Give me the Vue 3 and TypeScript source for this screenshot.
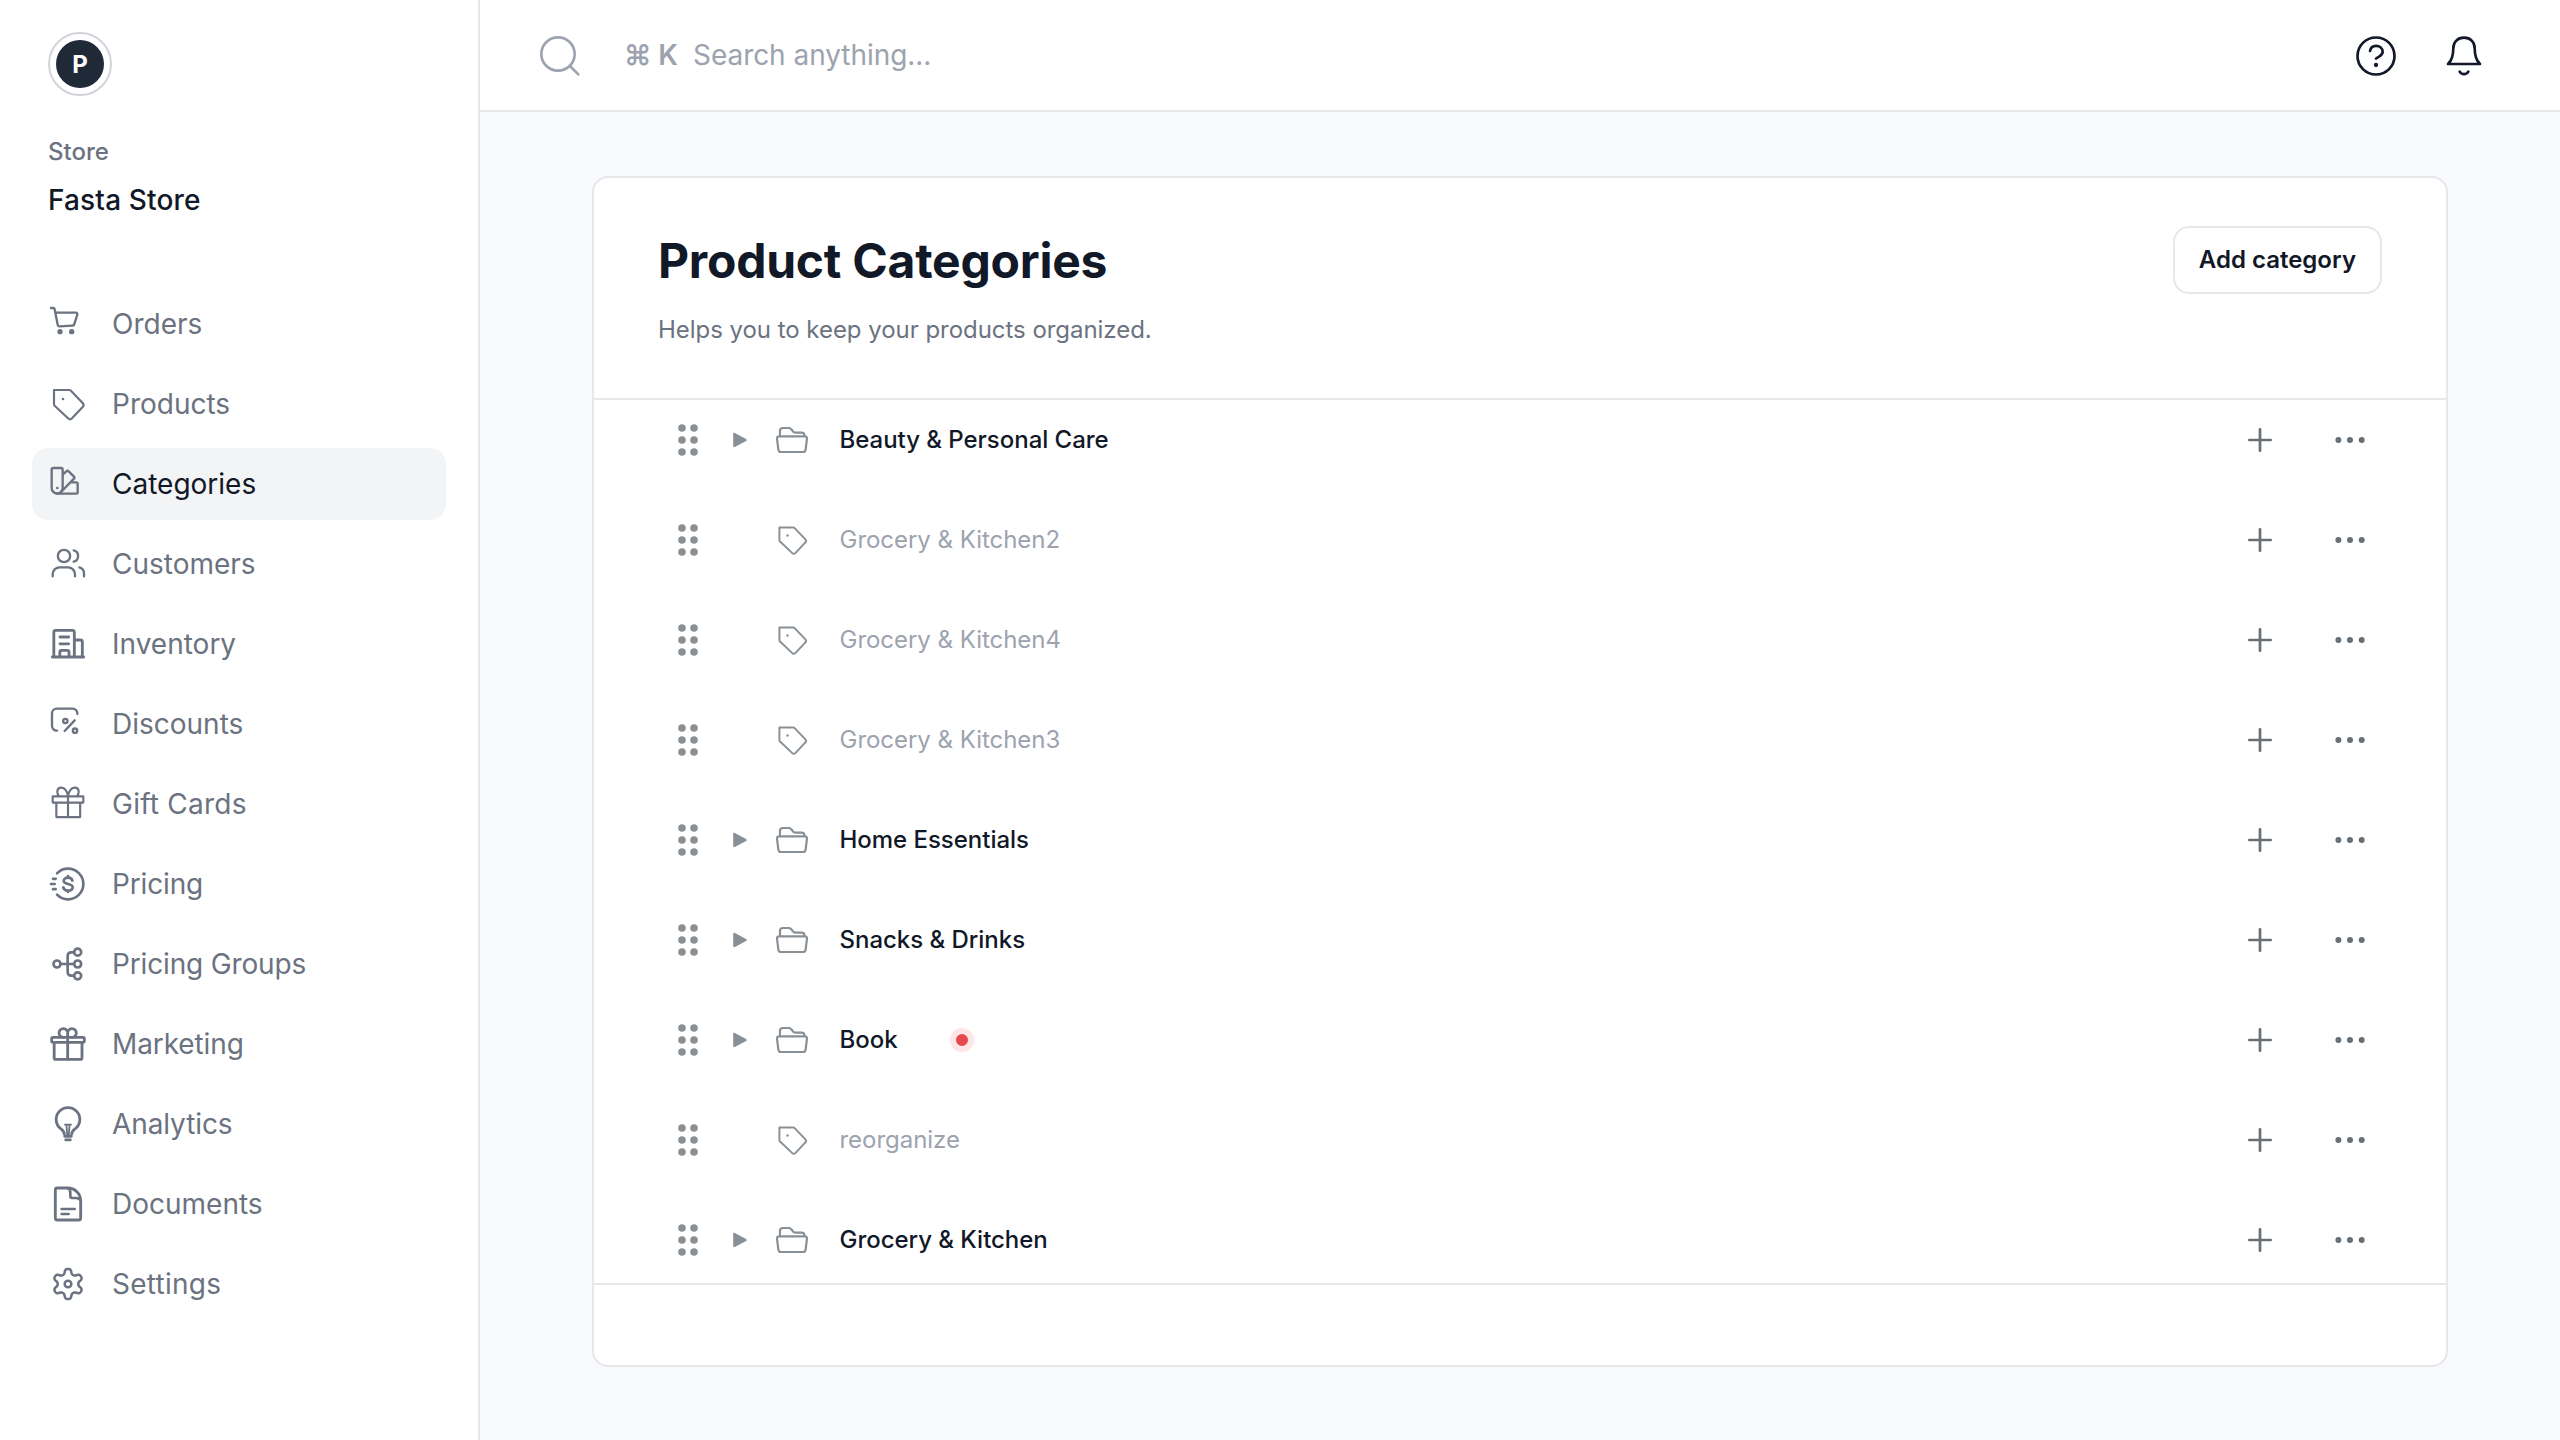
<script setup lang="ts">
import { ref } from 'vue'

interface NavItem {
  label: string
  icon: string
  stroke: number
  tracking?: number
}

interface Category {
  name: string
  hasChildren: boolean
  flagged?: boolean
}

// Six-lobed outline of the settings gear, centred in a 120 unit box.
function gearOutline(): string {
  const points: string[] = []
  for (let i = 0; i < 180; i++) {
    const angle = (i / 180) * Math.PI * 2
    const radius = 38 + (7 * Math.tanh(1.6 * Math.cos(6 * angle))) / Math.tanh(1.6)
    const x = 60 + radius * Math.sin(angle)
    const y = 60 - radius * Math.cos(angle)
    points.push(`${x.toFixed(2)} ${y.toFixed(2)}`)
  }
  return `M${points.join('L')}Z`
}

const tagIcon =
  '<path d="M18 18H64c2 0 3 .5 4 1.5L104 57c4 4 4 8 0 12L72 103c-4 4-8 4-12 0L20 65c-1-1-2-2-2-4z"/><circle cx="45" cy="45" r="4" fill="currentColor" stroke="none"/>'

const navItems: NavItem[] = [
  {
    label: 'Orders',
    stroke: 7,
    icon: '<path d="M9 12h7q3 0 4 4l9 46q1 5 6 5l36-2q7 0 8-5l9-28q1-6-5-6H22"/><g fill="currentColor" stroke="none"><circle cx="36" cy="83" r="8"/><circle cx="71" cy="83" r="8"/></g>',
  },
  { label: 'Products', stroke: 6.5, icon: tagIcon },
  {
    label: 'Categories',
    stroke: 7,
    icon: '<path d="M11 17a5 5 0 0 1 5-5h23a5 5 0 0 1 5 5v55a16.500 16.500 0 0 1-33 0z"/><path d="M45 31l10-9q4-3 7 0l16 16q3 3 0 6L39 84"/><path d="M72 55h13q4 0 4 4v26q0 4-4 4H27"/><circle cx="28" cy="72" r="4" fill="currentColor" stroke="none"/>',
  },
  {
    label: 'Customers',
    stroke: 7,
    icon: '<circle cx="48" cy="36" r="18.500"/><path d="M14 97V91A21 21 0 0 1 35 70H60A21 21 0 0 1 81 91V97M77 19a17.500 17.500 0 0 1 0 34M94 70a19 19 0 0 1 14 19v8"/>',
  },
  {
    label: 'Inventory',
    stroke: 8.5,
    icon: '<path d="M13 99H107M17.500 99V25a6 6 0 0 1 6-6H73a6 6 0 0 1 6 6V99M79 48H97a6 6 0 0 1 6 6V99M36 39H62M36 59.500H62M35.500 99V84a5 5 0 0 1 5-5H58a5 5 0 0 1 5 5V99"/>',
  },
  {
    label: 'Discounts',
    stroke: 7,
    icon: '<path d="M88 30V28A14 14 0 0 0 74 14H26A14 14 0 0 0 12 28V66A14 14 0 0 0 27 80M50 81L80 49"/><circle cx="52" cy="51" r="6.500"/><circle cx="81" cy="80" r="6.500"/>',
  },
  {
    label: 'Gift Cards',
    stroke: 6.5,
    tracking: 0.25,
    icon: '<path d="M15 37H105a1 1 0 0 1 1 1V55a1 1 0 0 1-1 1H15a1 1 0 0 1-1-1V38a1 1 0 0 1 1-1zM25 56V98a1.500 1.500 0 0 0 1.500 1.500H95a1.500 1.500 0 0 0 1.500-1.500V56M60 36V99M60 36C58 22 50 11 41 11c-8 0-13 5-13 12 0 6 2 10 5 13M60 36C62 22 70 11 79 11c8 0 13 5 13 12 0 6-2 10-5 13"/>',
  },
  {
    label: 'Pricing',
    stroke: 8,
    tracking: -0.15,
    icon: '<path d="M27 28A46 46 0 1 1 27 92M15 44.500H23M9 60H20M15 75.500H23M73 50c-1-6-6-9-13-9s-13 4-13 9.500c0 6 5 8 13 9.500s14 4 14 10-6 10-14 10-13-4-14-10M60 36v5M60 80v4"/>',
  },
  {
    label: 'Pricing Groups',
    stroke: 8,
    tracking: -0.15,
    icon: '<circle cx="27" cy="60" r="10.500"/><circle cx="89" cy="24.500" r="10.500"/><circle cx="89" cy="60" r="10.500"/><circle cx="89" cy="95.500" r="10.500"/><path d="M38 60H78M78 25H69a10 10 0 0 0-10 10V85a10 10 0 0 0 10 10H78"/>',
  },
  {
    label: 'Marketing',
    stroke: 8.5,
    tracking: -0.1,
    icon: '<rect x="11" y="40" width="98" height="15" rx="4"/><path d="M18.500 55V101a5 5 0 0 0 5 5H97a5 5 0 0 0 5-5V55M59 28V106M59 40V28a13 13 0 1 0-13 12M59 28a13 13 0 1 1 13 12"/>',
  },
  {
    label: 'Analytics',
    stroke: 8.5,
    tracking: -0.1,
    icon: '<path d="M49 91c0-7-4-12-11-17A35.500 35.500 0 1 1 82 74c-7 5-11 10-11 17M50 97H70M53 107.500H67"/><path stroke-width="5.500" d="M51 62H69M55.500 64L57.500 92M64.500 64L62.500 92"/>',
  },
  {
    label: 'Documents',
    stroke: 8.5,
    icon: '<path d="M28 12H59c22 0 39 17 39 39V102a6 6 0 0 1-6 6H28a6 6 0 0 1-6-6V18a6 6 0 0 1 6-6z"/><path stroke-width="8" d="M58 12q9 3 9 13v12q0 5 5 5h12q8 0 13 6M41 75H80M41 90H62"/>',
  },
  {
    label: 'Settings',
    stroke: 7.5,
    tracking: 0.25,
    icon: `<path d="${gearOutline()}"/><circle cx="60" cy="60" r="10"/>`,
  },
]

const active = ref('Categories')

const categories: Category[] = [
  { name: 'Beauty & Personal Care', hasChildren: true },
  { name: 'Grocery & Kitchen2', hasChildren: false },
  { name: 'Grocery & Kitchen4', hasChildren: false },
  { name: 'Grocery & Kitchen3', hasChildren: false },
  { name: 'Home Essentials', hasChildren: true },
  { name: 'Snacks & Drinks', hasChildren: true },
  { name: 'Book', hasChildren: true, flagged: true },
  { name: 'reorganize', hasChildren: false },
  { name: 'Grocery & Kitchen', hasChildren: true },
]
</script>

<template>
  <div class="shell">
    <aside class="sidebar">
      <div class="avatar"><span class="avatar-letter">P</span></div>
      <div class="store-label">Store</div>
      <div class="store-name">Fasta Store</div>
      <nav class="nav">
        <a
          v-for="item in navItems"
          :key="item.label"
          class="nav-item"
          :class="{ active: item.label === active }"
          @click="active = item.label"
        >
          <svg class="nav-icon line" viewBox="0 0 120 120" :stroke-width="item.stroke" v-html="item.icon" />
          <span :style="{ letterSpacing: `${item.tracking ?? 0}px` }">{{ item.label }}</span>
        </a>
      </nav>
    </aside>

    <div class="main">
      <header class="topbar">
        <svg class="top-icon search-icon line" viewBox="0 0 132 132" stroke-width="8">
          <circle cx="60" cy="60" r="50" />
          <path d="M97 97L121 121" />
        </svg>
        <div class="search"><span class="shortcut">⌘ K</span><span>Search anything...</span></div>
        <div class="top-actions">
          <svg class="top-icon line" viewBox="0 0 132 132" stroke-width="8">
            <circle cx="66" cy="66" r="55.500" />
            <path d="M48 51C50 40 57 35.500 66 35.500c11 0 20 7 20 18C86 66 74 66 66 74" />
            <circle cx="66" cy="93" r="6.500" fill="currentColor" stroke="none" />
          </svg>
          <svg class="top-icon line" viewBox="0 0 132 132" stroke-width="8">
            <path d="M66 11C47 11 34 24 34 42C34 62 30 79 18 90H114C102 79 98 62 98 42C98 24 85 11 66 11Z" />
            <path d="M53 113c6 10 20 10 26 0" />
          </svg>
        </div>
      </header>

      <section class="card">
        <div class="card-head">
          <div>
            <h1 class="title">Product Categories</h1>
            <p class="subtitle">Helps you to keep your products organized.</p>
          </div>
          <button class="add-button" type="button">Add category</button>
        </div>

        <div class="rows">
          <div v-for="category in categories" :key="category.name" class="row">
            <svg class="drag" viewBox="0 0 40 40" fill="currentColor">
              <circle cx="14" cy="8" r="3.800" />
              <circle cx="26" cy="8" r="3.800" />
              <circle cx="14" cy="20" r="3.800" />
              <circle cx="26" cy="20" r="3.800" />
              <circle cx="14" cy="32" r="3.800" />
              <circle cx="26" cy="32" r="3.800" />
            </svg>
            <div class="toggle">
              <svg v-if="category.hasChildren" viewBox="0 0 16 16" fill="currentColor">
                <path d="M1.200 2C1.200 1 2 .6 2.900 1L14 6.900c1 .6 1 1.600 0 2.200L2.900 15C2 15.400 1.200 15 1.200 14z" />
              </svg>
            </div>
            <svg v-if="category.hasChildren" class="kind line" viewBox="0 0 108 108" stroke-width="6.500">
              <path
                d="M18 42V27a9 9 0 0 1 9-9H44q4 0 7 3l7 8q3 3 7 3H83q8 0 9 10M15 43H93q6 0 6 7L95 82q-1 8-8 8H21q-7 0-8-8L9 50q0-7 6-7z"
              />
            </svg>
            <svg v-else class="kind line" viewBox="0 0 120 120" stroke-width="6.500" v-html="tagIcon" />
            <span class="name" :class="{ parent: category.hasChildren }">{{ category.name }}</span>
            <span v-if="category.flagged" class="flag"></span>
            <div class="row-actions">
              <svg viewBox="0 0 40 40" class="line" stroke-width="2.700">
                <path d="M9.300 20H30.700M20 9.300V30.700" />
              </svg>
              <svg viewBox="0 0 40 40" fill="currentColor">
                <circle cx="8.400" cy="20" r="3" />
                <circle cx="20" cy="20" r="3" />
                <circle cx="31.700" cy="20" r="3" />
              </svg>
            </div>
          </div>
        </div>
      </section>
    </div>
  </div>
</template>

<style>
body {
  margin: 0;
  background: #f9fafb;
}
</style>

<style scoped>
.shell {
  display: flex;
  width: 2560px;
  height: 1440px;
  overflow: hidden;
  font-family: Inter, 'Liberation Sans', sans-serif;
  color: #111827;
  background: #f9fafc;
}

.shell * {
  box-sizing: border-box;
}

.line {
  fill: none;
  stroke: currentColor;
  stroke-linecap: round;
  stroke-linejoin: round;
}

.sidebar {
  flex: none;
  width: 480px;
  padding: 32px 32px 0;
  border-right: 2px solid #e5e7eb;
  background: #fff;
  box-sizing: border-box;
}

.avatar {
  display: flex;
  width: 64px;
  height: 64px;
  margin-left: 16px;
  padding: 6px;
  border: 2px solid #d1d5db;
  border-radius: 50%;
}

.avatar-letter {
  display: flex;
  flex: 1;
  align-items: center;
  justify-content: center;
  border-radius: 50%;
  background: #1f2937;
  color: #fff;
  font-size: 24px;
  font-weight: 700;
}

.store-label {
  margin: 40px 0 0 16px;
  font-size: 24px;
  font-weight: 500;
  line-height: 32px;
  color: #6b7280;
}

.store-name {
  margin: 12px 0 0 16px;
  font-size: 28px;
  font-weight: 500;
  line-height: 40px;
  letter-spacing: 0.15px;
}

.nav {
  display: flex;
  flex-direction: column;
  gap: 8px;
  margin-top: 68px;
}

.nav-item {
  display: flex;
  align-items: center;
  gap: 24px;
  height: 72px;
  padding: 0 16px;
  border-radius: 16px;
  font-size: 28px;
  line-height: 40px;
  color: #6b7280;
}

.nav-item.active {
  background: #f3f4f6;
  color: #111827;
}

.nav-icon {
  flex: none;
  width: 40px;
  height: 40px;
  color: #6b7280;
}

.main {
  flex: 1;
  min-width: 0;
}

.topbar {
  display: flex;
  align-items: center;
  height: 112px;
  padding: 0 74px 0 58px;
  border-bottom: 2px solid #e5e7eb;
  background: #fff;
}

.top-icon {
  flex: none;
  width: 44px;
  height: 44px;
  margin-top: 2px;
}

.search-icon {
  color: #9ca3af;
}

.search {
  display: flex;
  gap: 15px;
  margin-left: 42px;
  font-size: 28px;
  line-height: 40px;
  letter-spacing: -0.05px;
  color: #9ca3af;
}

.shortcut {
  font-weight: 600;
}

.top-actions {
  display: flex;
  gap: 44px;
  margin-left: auto;
}

.card {
  width: 1856px;
  height: 1191px;
  margin: 64px 0 0 112px;
  border: 2px solid #e5e7eb;
  border-radius: 16px;
  background: #fff;
}

.card-head {
  display: flex;
  align-items: flex-start;
  justify-content: space-between;
  height: 222px;
  padding: 48px 64px 0;
  border-bottom: 2px solid #e5e7eb;
}

.title {
  margin: 3px 0 0;
  font-size: 48px;
  font-weight: 700;
  line-height: 64px;
  letter-spacing: -0.005em;
}

.subtitle {
  margin: 21px 0 0;
  font-size: 24px;
  line-height: 32px;
  letter-spacing: -0.04px;
  color: #6b7280;
}

.add-button {
  height: 68px;
  padding: 0 24px 2px;
  border: 2px solid #e5e7eb;
  border-radius: 16px;
  background: #fff;
  color: #111827;
  font-family: inherit;
  font-size: 24px;
  font-weight: 600;
}

.rows {
  display: flex;
  flex-direction: column;
  gap: 20px;
  padding: 0 76px 3px 74px;
  border-bottom: 2px solid #e5e7eb;
}

.row {
  display: flex;
  align-items: center;
  height: 80px;
}

.drag {
  width: 40px;
  height: 40px;
  color: #889096;
}

.toggle {
  width: 16px;
  height: 16px;
  margin-left: 24px;
  color: #889096;
}

.toggle svg {
  display: block;
}

.kind {
  width: 36px;
  height: 36px;
  margin-left: 26px;
  color: #889096;
}

.name {
  margin-left: 29.5px;
  font-size: 24px;
  line-height: 32px;
  letter-spacing: -0.03px;
  color: #9ca3af;
}

.name.parent {
  font-weight: 500;
  color: #111827;
}

.flag {
  width: 24px;
  height: 24px;
  margin-left: 52.5px;
  border: 6px solid #ffe5e5;
  border-radius: 50%;
  background: #e5484d;
}

.row-actions {
  display: flex;
  gap: 50px;
  margin-left: auto;
  color: #687076;
}

.row-actions svg {
  width: 40px;
  height: 40px;
}
</style>
